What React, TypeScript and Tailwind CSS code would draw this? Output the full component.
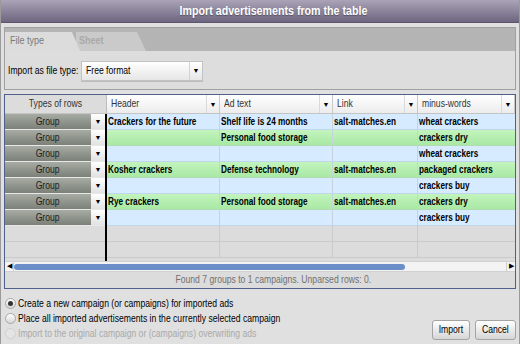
import React from 'react'

const font = { fontFamily: "'Liberation Sans', Arial, sans-serif" }

interface Row {
  header: string
  adText: string
  link: string
  minus: string
  green: boolean
}

const rows: Row[] = [
  { header: 'Crackers for the future', adText: 'Shelf life is 24 months', link: 'salt-matches.en', minus: 'wheat crackers', green: false },
  { header: '', adText: 'Personal food storage', link: '', minus: 'crackers dry', green: true },
  { header: '', adText: '', link: '', minus: 'wheat crackers', green: false },
  { header: 'Kosher crackers', adText: 'Defense technology', link: 'salt-matches.en', minus: 'packaged crackers', green: true },
  { header: '', adText: '', link: '', minus: 'crackers buy', green: false },
  { header: 'Rye crackers', adText: 'Personal food storage', link: 'salt-matches.en', minus: 'crackers dry', green: true },
  { header: '', adText: '', link: '', minus: 'crackers buy', green: false },
]

// узкий шрифт (Arial Narrow) имитируем сжатием по горизонтали
function N({ children, center }: { children: React.ReactNode; center?: boolean }) {
  return (
    <span className={`inline-block whitespace-nowrap scale-x-[0.82] ${center ? 'origin-center' : 'origin-left'}`}>
      {children}
    </span>
  )
}

function Arrow() {
  return <span className="text-[7px] leading-none text-black">▼</span>
}

function HeaderCell({ label, width }: { label: string; width: string }) {
  return (
    <div className={`${width} flex h-full border-r border-[#c9c9c9] bg-gradient-to-b from-white to-[#ececec]`}>
      <div className="flex-1 flex items-center pl-[4px] text-[10.5px] text-[#333] overflow-hidden">
        <N>{label}</N>
      </div>
      <div className="w-[13px] flex items-center justify-center border-l border-[#dadada]">
        <Arrow />
      </div>
    </div>
  )
}

function RadioOption({ label, checked, disabled }: { label: string; checked?: boolean; disabled?: boolean }) {
  return (
    <div className="flex items-center h-[15px]">
      <span
        className={`w-[11px] h-[11px] rounded-full border flex items-center justify-center ${
          disabled ? 'border-[#d0d0d0] bg-[#e4e4e4]' : 'border-[#a8a8a8] bg-gradient-to-b from-white to-[#d6d6d6]'
        }`}
      >
        {checked && <span className="w-[5px] h-[5px] rounded-full bg-[#333]" />}
      </span>
      <span className={`ml-[2px] text-[10.5px] ${disabled ? 'text-[#a9a9a9]' : 'text-black'}`}>
        <N>{label}</N>
      </span>
    </div>
  )
}

export default function App() {
  return (
    <div style={font} className="w-[520px] h-[344px] overflow-hidden bg-[#e0e0e0] border-x border-[#9a9a9a] flex flex-col">
      {/* Заголовок */}
      <div className="h-[23px] shrink-0 flex items-center justify-center pl-[26px] bg-gradient-to-b from-[#aba3b7] to-[#6e6680] border-b border-[#5c556b]">
        <span className="text-[13px] font-bold text-white [text-shadow:0_1px_1px_rgba(0,0,0,0.35)]">
          <N center>Import advertisements from the table</N>
        </span>
      </div>

      {/* Вкладки */}
      <div className="mx-[3px] mt-[4px] h-[63px] shrink-0 border border-[#a0a0a0] flex flex-col">
        <div className="h-[23px] shrink-0 bg-[#b4b4b4] flex items-end">
          <div className="relative w-[75px] h-[19px] bg-[#dcdcdc] [clip-path:polygon(0_0,67px_0,75px_100%,0_100%)] flex items-center pl-[5px] pb-[2px] text-[11px] text-[#7a7a7a] z-10">
            <N>File type</N>
          </div>
          <div className="-ml-[4px] w-[70px] h-[19px] bg-[#cacaca] [clip-path:polygon(0_0,61px_0,70px_100%,0_100%)] flex items-center pl-[3px] pb-[2px] text-[11px] font-bold text-[#a9a9a9]">
            <N>Sheet</N>
          </div>
        </div>
        <div className="flex-1 bg-[#dddddd] flex items-center pl-[3px] pt-[1px]">
          <span className="w-[73px] text-[10.5px] text-black">
            <N>Import as file type:</N>
          </span>
          <div className="w-[122px] h-[20px] flex border border-[#c2c2c2] bg-gradient-to-b from-white to-[#e6e6e6] shadow-[0_1px_0_#bdbdbd]">
            <div className="flex-1 flex items-center pl-[4px] text-[10.5px] text-black">
              <N>Free format</N>
            </div>
            <div className="w-[13px] flex items-center justify-center border-l border-[#d4d4d4]">
              <Arrow />
            </div>
          </div>
        </div>
      </div>

      {/* Таблица */}
      <div className="mx-[3px] mt-[4px] h-[195px] shrink-0 border border-[#50608a] bg-[#dcdcdc] flex flex-col">
        {/* Шапка */}
        <div className="h-[19px] shrink-0 flex border-b border-[#c4c4c4]">
          <div className="w-[102px] h-full flex items-center justify-center bg-[#dcdcdc] border-r border-[#bdbdbd] text-[10.5px] text-[#333]">
            <N center>Types of rows</N>
          </div>
          <HeaderCell label="Header" width="w-[113px]" />
          <HeaderCell label="Ad text" width="w-[113px]" />
          <HeaderCell label="Link" width="w-[85px]" />
          <HeaderCell label="minus-words" width="w-[97px]" />
        </div>

        {/* Строки */}
        <div className="h-[147px] shrink-0 flex">
          <div className="w-[100px] shrink-0 flex flex-col">
            {rows.map((_, i) => (
              <div key={i} className="h-[16px] flex border-b border-[#e8e8e8]">
                <div className="w-[86px] flex items-center justify-center bg-gradient-to-b from-[#a6aca3] to-[#7b8078] text-[10.5px] text-[#1c1c1c]">
                  <N center>Group</N>
                </div>
                <div className="w-[14px] flex items-center justify-center bg-gradient-to-b from-white to-[#e2e2e2]">
                  <Arrow />
                </div>
              </div>
            ))}
            <div className="h-[16px] border-b border-[#cacaca]" />
            <div className="h-[16px] border-b border-[#cacaca]" />
          </div>
          <div className="w-[2px] shrink-0 bg-black" />
          <div className="flex-1 flex flex-col">
            {rows.map((r, i) => (
              <div
                key={i}
                className={`h-[16px] flex text-[10px] font-bold text-black ${
                  r.green
                    ? 'bg-gradient-to-b from-[#c2f4bd] to-[#a9e9a4] border-b border-[#b2dcb0]'
                    : 'bg-[#d6ebff] border-b border-[#c0d6ea]'
                }`}
              >
                <div className="w-[113px] flex items-center pl-[1px] border-r border-[#c6d2dc] overflow-hidden">
                  <N>{r.header}</N>
                </div>
                <div className="w-[113px] flex items-center pl-[1px] border-r border-[#c6d2dc] overflow-hidden">
                  <N>{r.adText}</N>
                </div>
                <div className="w-[85px] flex items-center pl-[1px] border-r border-[#c6d2dc] overflow-hidden">
                  <N>{r.link}</N>
                </div>
                <div className="w-[97px] flex items-center pl-[1px] overflow-hidden">
                  <N>{r.minus}</N>
                </div>
              </div>
            ))}
            {[0, 1].map(i => (
              <div key={i} className="h-[16px] flex border-b border-[#cacaca]">
                <div className="w-[113px] border-r border-[#cacaca]" />
                <div className="w-[113px] border-r border-[#cacaca]" />
                <div className="w-[85px] border-r border-[#cacaca]" />
                <div className="w-[97px]" />
              </div>
            ))}
          </div>
        </div>

        {/* Прокрутка */}
        <div className="h-[11px] shrink-0 flex items-center bg-[#f3f3f3] border-y border-[#d0d0d0]">
          <div className="w-[9px] h-full flex items-center justify-center text-[7px] text-black border-r border-[#d0d0d0]">◀</div>
          <div className="flex-1 h-full flex items-center">
            <div className="w-[391px] h-[6px] rounded-full bg-[#6c8ec8]" />
          </div>
          <div className="w-[9px] h-full flex items-center justify-center text-[7px] text-black border-l border-[#d0d0d0]">▶</div>
        </div>

        {/* Статус */}
        <div className="flex-1 flex items-center justify-center pl-[26px] text-[10.5px] text-[#707070]">
          <N center>Found 7 groups to 1 campaigns. Unparsed rows: 0.</N>
        </div>
      </div>

      {/* Варианты и кнопки */}
      <div className="flex-1 flex items-end justify-between pl-[4px] pr-[3px] pb-[4px]">
        <div className="flex flex-col -mb-[1px]">
          <RadioOption label="Create a new campaign (or campaigns) for imported ads" checked />
          <RadioOption label="Place all imported advertisements in the currently selected campaign" />
          <RadioOption label="Import to the original campaign or (campaigns) overwriting ads" disabled />
        </div>
        <div className="flex gap-[5px]">
          <button className="w-[38px] h-[20px] rounded-[3px] border border-[#a4a4a4] bg-gradient-to-b from-white to-[#d6d6d6] text-[10.5px] text-black">
            <N center>Import</N>
          </button>
          <button className="w-[41px] h-[20px] rounded-[3px] border border-[#a4a4a4] bg-gradient-to-b from-white to-[#d6d6d6] text-[10.5px] text-black">
            <N center>Cancel</N>
          </button>
        </div>
      </div>
    </div>
  )
}
